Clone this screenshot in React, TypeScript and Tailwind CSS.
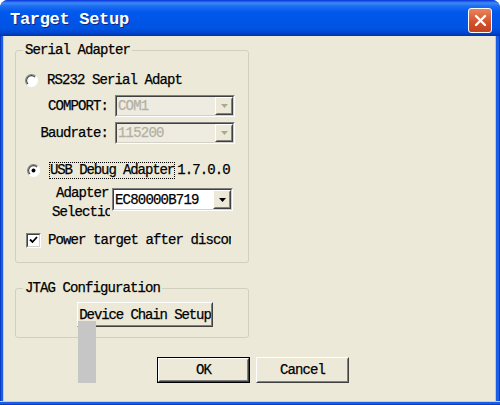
import type { ReactNode } from "react";

function Radio({ checked }: { checked?: boolean }) {
  return (
    <svg width="13" height="13" viewBox="0 0 12 12" className="shrink-0">
      <circle cx="6" cy="6" r="5.5" fill="#ffffff" />
      <path d="M9.89 2.11 A5.5 5.5 0 0 0 2.11 9.89" fill="none" stroke="#8a8a8a" strokeWidth="1" />
      <path d="M9.2 2.8 A4.5 4.5 0 0 0 2.8 9.2" fill="none" stroke="#404040" strokeWidth="1" />
      <path d="M2.11 9.89 A5.5 5.5 0 0 0 9.89 2.11" fill="none" stroke="#ffffff" strokeWidth="1" />
      {checked && <circle cx="6" cy="6" r="1.8" fill="#000000" />}
    </svg>
  );
}

function Checkbox() {
  return (
    <div className="flex h-[15px] w-[15px] shrink-0 border border-t-[#808080] border-l-[#808080] border-b-white border-r-white">
      <div className="flex flex-1 items-center justify-center border border-t-[#404040] border-l-[#404040] border-b-[#d4d0c8] border-r-[#d4d0c8] bg-white">
        <svg width="9" height="8" viewBox="0 0 9 8">
          <path d="M1 3.5 L3.5 6 L8 1" fill="none" stroke="#000000" strokeWidth="1.8" />
        </svg>
      </div>
    </div>
  );
}

function Raised({ children, className = "" }: { children?: ReactNode; className?: string }) {
  return (
    <div className={`flex border border-t-white border-l-white border-b-[#404040] border-r-[#404040] ${className}`}>
      <div className="flex flex-1 items-center justify-center overflow-hidden border border-t-[#ece9d8] border-l-[#ece9d8] border-b-[#808080] border-r-[#808080] bg-[#ece9d8]">
        {children}
      </div>
    </div>
  );
}

function ComboBox({
  value,
  disabled,
  className = "",
}: {
  value: string;
  disabled?: boolean;
  className?: string;
}) {
  return (
    <div
      className={`flex border border-t-[#808080] border-l-[#808080] border-b-white border-r-white ${className}`}
    >
      <div
        className={`flex flex-1 items-stretch border border-t-[#404040] border-l-[#404040] border-b-[#d4d0c8] border-r-[#d4d0c8] ${
          disabled ? "bg-[#eeebe0]" : "bg-white"
        }`}
      >
        <div
          className={`flex flex-1 items-center pl-[1px] font-['Liberation_Mono',monospace] text-[14px] tracking-[-0.8px] ${
            disabled ? "text-[#b3b0a3]" : "text-black"
          }`}
        >
          {value}
        </div>
        <Raised className="w-[18px]">
          <svg width="7" height="4" viewBox="0 0 7 4">
            <polygon points="0,0 7,0 3.5,4" fill={disabled ? "#aca899" : "#000000"} />
          </svg>
        </Raised>
      </div>
    </div>
  );
}

export default function App() {
  return (
    <div className="relative flex h-[405px] w-[500px] flex-col overflow-hidden rounded-t-[8px] bg-[#0a4bdb]">
      <div className="flex h-[36px] shrink-0 items-start justify-between bg-[linear-gradient(180deg,#0831d9_0px,#3d8bf6_3px,#1e6ef0_6px,#0058ee_12px,#0054e3_28px,#0046cf_33px,#0a2f9f_36px)] pl-[10px] pr-[8px]">
        <span className="mt-[10px] font-['Liberation_Mono',monospace] text-[17px] font-bold leading-[20px] tracking-[-0.3px] text-white [text-shadow:1px_1px_#0a2a8a]">
          Target Setup
        </span>
        <div className="mt-[8px] flex h-[25px] w-[24px] items-center justify-center rounded-[3px] border border-white bg-[linear-gradient(180deg,#e9855f,#d1502a_60%,#c4411e)]">
          <svg width="13" height="13" viewBox="0 0 13 13">
            <path d="M2 2 L11 11 M11 2 L2 11" stroke="#ffffff" strokeWidth="2.4" strokeLinecap="round" />
          </svg>
        </div>
      </div>

      <div className="flex flex-1">
        <div className="w-[4px] bg-[linear-gradient(90deg,#0a3cc2_0_1px,#1a5ee6_1px_3px,#b7cff2_3px)]" />

        <div className="relative flex flex-1 flex-col bg-[#ece9d8] font-['Liberation_Mono',monospace] text-[14px] leading-[16px] tracking-[-0.9px] text-black [-webkit-text-stroke:0.25px_currentColor]">
          <fieldset className="ml-[11px] mt-[6px] w-[234px] rounded-[3px] border border-[#d0d0bf] pb-[14px]">
            <legend className="ml-[7px] px-[2px] leading-[16px]">Serial Adapter</legend>

            <div className="mt-[14px] flex h-[16px] items-center">
              <div className="ml-[9px]">
                <Radio />
              </div>
              <span className="ml-[9px] whitespace-nowrap">RS232 Serial Adapt</span>
            </div>

            <div className="mt-[7px] flex h-[22px] items-center">
              <span className="w-[92px] text-right">COMPORT:</span>
              <ComboBox value="COM1" disabled className="ml-[7px] h-[22px] w-[120px]" />
            </div>

            <div className="mt-[5px] flex h-[22px] items-center">
              <span className="w-[92px] text-right">Baudrate:</span>
              <ComboBox value="115200" disabled className="ml-[7px] h-[22px] w-[120px]" />
            </div>

            <div className="mt-[17px] flex h-[18px] items-center">
              <div className="ml-[11px]">
                <Radio checked />
              </div>
              <span className="ml-[9px] whitespace-nowrap border border-dotted border-black leading-[15px] tracking-[-1.1px]">
                USB Debug Adapter
              </span>
              <span className="ml-[2px] whitespace-nowrap">1.7.0.0</span>
            </div>

            <div className="mt-[5px] flex items-start">
              <div className="ml-[36px] w-[58px] overflow-hidden leading-[19px]">
                <div className="whitespace-nowrap pl-[4px]">Adapter</div>
                <div className="whitespace-nowrap">Selection</div>
              </div>
              <ComboBox value="EC80000B719" className="ml-[2px] mt-[4px] h-[23px] w-[121px]" />
            </div>

            <div className="mt-[10px] flex h-[16px] items-center">
              <div className="ml-[10px]">
                <Checkbox />
              </div>
              <span className="ml-[7px] w-[183px] overflow-hidden whitespace-nowrap">
                Power target after disconnect
              </span>
            </div>
          </fieldset>

          <fieldset className="ml-[11px] mt-[17px] w-[234px] rounded-[3px] border border-[#d0d0bf] pb-[10px]">
            <legend className="ml-[7px] px-[2px] leading-[16px]">JTAG Configuration</legend>
            <Raised className="ml-[61px] mt-[6px] h-[25px] w-[136px]">
              <span className="whitespace-nowrap tracking-[-1.1px]">Device Chain Setup</span>
            </Raised>
          </fieldset>

          <div className="ml-[153px] mt-[19px] flex gap-[6px]">
            <div className="flex h-[26px] w-[93px] border border-black">
              <Raised className="flex-1">
                <span>OK</span>
              </Raised>
            </div>
            <Raised className="h-[26px] w-[93px]">
              <span>Cancel</span>
            </Raised>
          </div>

          <div className="absolute left-[74px] top-[285px] h-[62px] w-[18px] bg-[#c6c6c6]" />
        </div>

        <div className="w-[5px] bg-[linear-gradient(90deg,#c9c6b8_0_1px,#1a5ee6_1px_4px,#0a3cc2_4px)]" />
      </div>

      <div className="h-[4px] shrink-0 bg-[linear-gradient(180deg,#b7cff2_0_1px,#1a5ee6_1px_3px,#0a3cc2_3px)]" />
    </div>
  );
}
